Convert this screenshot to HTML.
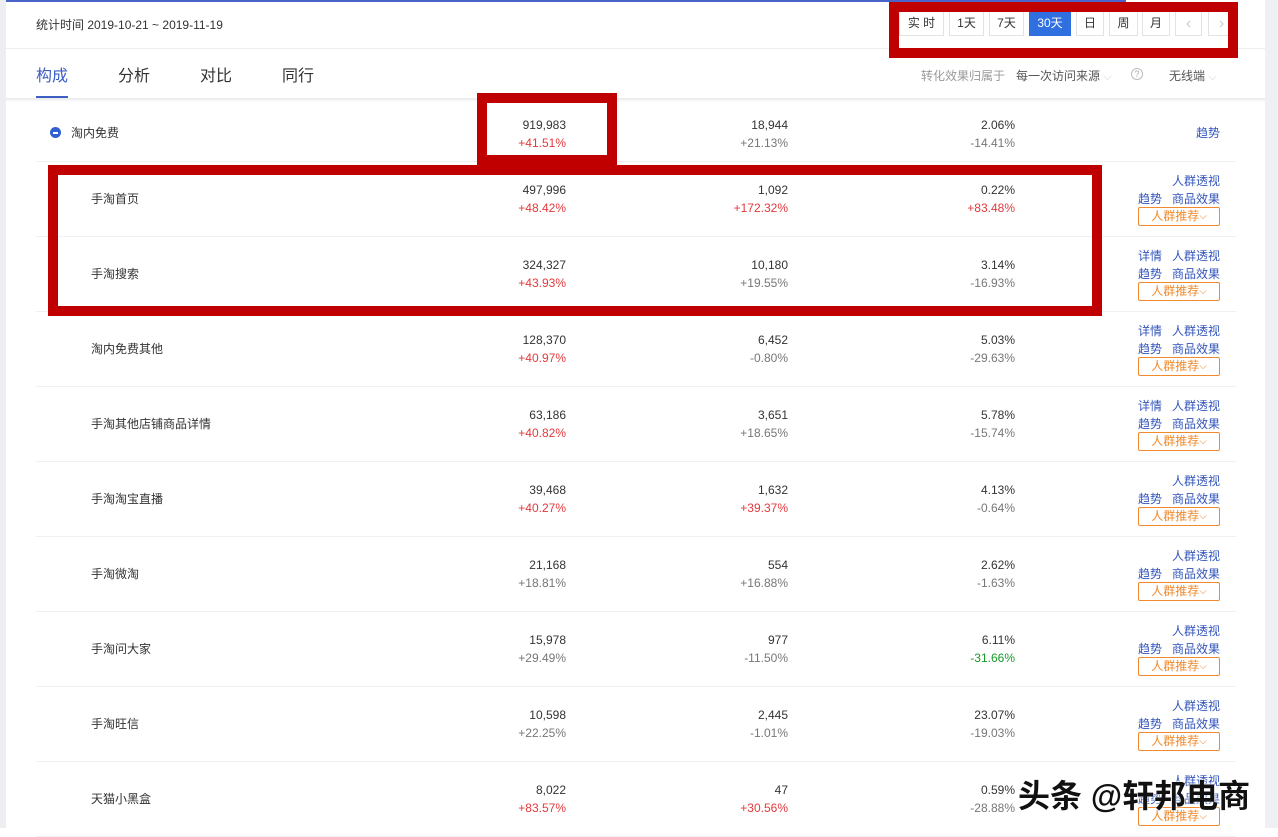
<!DOCTYPE html>
<html><head><meta charset="utf-8"><style>
*{margin:0;padding:0;box-sizing:border-box}
body{width:1278px;height:828px;overflow:hidden;background:#fff;font-family:"Liberation Sans","Noto Sans CJK SC",sans-serif;position:relative;color:#333}
.a{position:absolute;white-space:nowrap}
.lg{position:absolute;left:0;top:0;width:6px;height:828px;background:#eceef2}
.rg{position:absolute;left:1265px;top:0;width:13px;height:828px;background:#eef0f4}
.top{position:absolute;left:6px;top:0;width:1120px;height:2px;background:#4a63c8}
.btn{position:absolute;top:11px;height:25px;border:1px solid #e3e3e3;font-size:12px;line-height:23px;text-align:center;color:#333;background:#fff}
.sep{position:absolute;left:36px;width:1200px;height:1px;background:#eef0f3}
.num{position:absolute;text-align:right;font-size:12px;line-height:18px;color:#333}
.red{color:#e4393c}.grey{color:#777}.green{color:#1a9a2a}
.nm{position:absolute;left:91px;font-size:12px;color:#333}
.act{position:absolute;right:58px;text-align:right;font-size:12px;line-height:18px;color:#3355bb;width:100px}
.tj{position:absolute;left:1138px;width:82px;height:19px;border:1px solid #f08a2c;color:#f08a2c;font-size:12px;line-height:17px;text-align:center;border-radius:2px}
.tj small{font-size:10px;position:relative;top:-1px}
.box{position:absolute;border:10px solid #c00000}
</style></head><body>
<div class="lg"></div><div class="rg"></div><div class="top"></div>
<div class="a" style="left:36px;top:16px;font-size:12px;color:#333">统计时间 2019-10-21 ~ 2019-11-19</div>
<div class="btn" style="left:899px;width:45px">实 时</div>
<div class="btn" style="left:949px;width:35px">1天</div>
<div class="btn" style="left:989px;width:35px">7天</div>
<div class="btn" style="left:1029px;width:42px;background:#2f6fe0;color:#fff;border-color:#2f6fe0">30天</div>
<div class="btn" style="left:1076px;width:28px">日</div>
<div class="btn" style="left:1109px;width:29px">周</div>
<div class="btn" style="left:1142px;width:28px">月</div>
<div class="btn" style="left:1175px;width:27px;color:#ccc;font-size:16px">‹</div>
<div class="btn" style="left:1208px;width:27px;color:#ccc;font-size:16px">›</div>
<div style="position:absolute;left:6px;top:48px;width:1259px;height:1px;background:#eee"></div>
<div class="a" style="left:36px;top:62px;font-size:16px;color:#3d5fc4">构成</div>
<div style="position:absolute;left:36px;top:96px;width:32px;height:3px;background:#3d5fc4"></div>
<div class="a" style="left:118px;top:62px;font-size:16px">分析</div>
<div class="a" style="left:200px;top:62px;font-size:16px">对比</div>
<div class="a" style="left:282px;top:62px;font-size:16px">同行</div>
<div class="a" style="left:921px;top:67px;font-size:12px;color:#999">转化效果归属于</div>
<div class="a" style="left:1016px;top:67px;font-size:12px;color:#555">每一次访问来源 <span style="color:#ccc;font-size:11px">⌵</span></div>
<div class="a" style="left:1131px;top:68px;width:12px;height:12px;border:1px solid #bbb;border-radius:50%;font-size:9px;line-height:10px;text-align:center;color:#aaa">?</div>
<div class="a" style="left:1169px;top:67px;font-size:12px;color:#555">无线端 <span style="color:#ccc;font-size:11px">⌵</span></div>
<div style="position:absolute;left:6px;top:98px;width:1259px;height:4px;background:linear-gradient(#e8e8e8,#fff)"></div>

<div class="a" style="left:50px;top:127px;width:11px;height:11px;border-radius:50%;background:#2f5fd0"><div style="position:absolute;left:3px;top:5px;width:5px;height:1.5px;background:#fff"></div></div>
<div class="a" style="left:71px;top:124px;font-size:12px">淘内免费</div>
<div class="num" style="left:400px;width:166px;top:116px">919,983<br><span class="red">+41.51%</span></div>
<div class="num" style="left:600px;width:188px;top:116px">18,944<br><span class="grey">+21.13%</span></div>
<div class="num" style="left:850px;width:165px;top:116px">2.06%<br><span class="grey">-14.41%</span></div>
<div class="act" style="top:124px">趋势</div>
<div class="sep" style="top:161px"></div>

<div id="rows"></div>
<script>
var d=[["手淘首页","497,996","+48.42%","red","1,092","+172.32%","red","0.22%","+83.48%","red",0],
["手淘搜索","324,327","+43.93%","red","10,180","+19.55%","grey","3.14%","-16.93%","grey",1],
["淘内免费其他","128,370","+40.97%","red","6,452","-0.80%","grey","5.03%","-29.63%","grey",1],
["手淘其他店铺商品详情","63,186","+40.82%","red","3,651","+18.65%","grey","5.78%","-15.74%","grey",1],
["手淘淘宝直播","39,468","+40.27%","red","1,632","+39.37%","red","4.13%","-0.64%","grey",0],
["手淘微淘","21,168","+18.81%","grey","554","+16.88%","grey","2.62%","-1.63%","grey",0],
["手淘问大家","15,978","+29.49%","grey","977","-11.50%","grey","6.11%","-31.66%","green",0],
["手淘旺信","10,598","+22.25%","grey","2,445","-1.01%","grey","23.07%","-19.03%","grey",0],
["天猫小黑盒","8,022","+83.57%","red","47","+30.56%","red","0.59%","-28.88%","grey",0]];
var h="";
d.forEach(function(r,i){var c=198+75*i;
h+='<div class="nm" style="top:'+(c-8)+'px">'+r[0]+'</div>';
h+='<div class="num" style="left:400px;width:166px;top:'+(c-17)+'px">'+r[1]+'<br><span class="'+r[3]+'">'+r[2]+'</span></div>';
h+='<div class="num" style="left:600px;width:188px;top:'+(c-17)+'px">'+r[4]+'<br><span class="'+r[6]+'">'+r[5]+'</span></div>';
h+='<div class="num" style="left:850px;width:165px;top:'+(c-17)+'px">'+r[7]+'<br><span class="'+r[9]+'">'+r[8]+'</span></div>';
h+='<div class="act" style="top:'+(c-26)+'px">'+(r[10]?'详情&nbsp;&nbsp;&nbsp;':'')+'人群透视<br>趋势&nbsp;&nbsp;&nbsp;商品效果</div>';
h+='<div class="tj" style="top:'+(c+9)+'px">人群推荐<small>⌵</small></div>';
h+='<div class="sep" style="top:'+(c+38)+'px"></div>';});
document.getElementById('rows').innerHTML=h;
</script>
<div class="box" style="left:889px;top:2px;width:349px;height:56px"></div>
<div class="box" style="left:477px;top:93px;width:140px;height:72px"></div>
<div class="box" style="left:48px;top:165px;width:1054px;height:151px"></div>
<div class="a" style="left:1018px;top:771px;font-size:32px;font-weight:bold;color:#111;text-shadow:0 0 2px #fff,0 0 2px #fff">头条 @轩邦电商</div>
</body></html>
